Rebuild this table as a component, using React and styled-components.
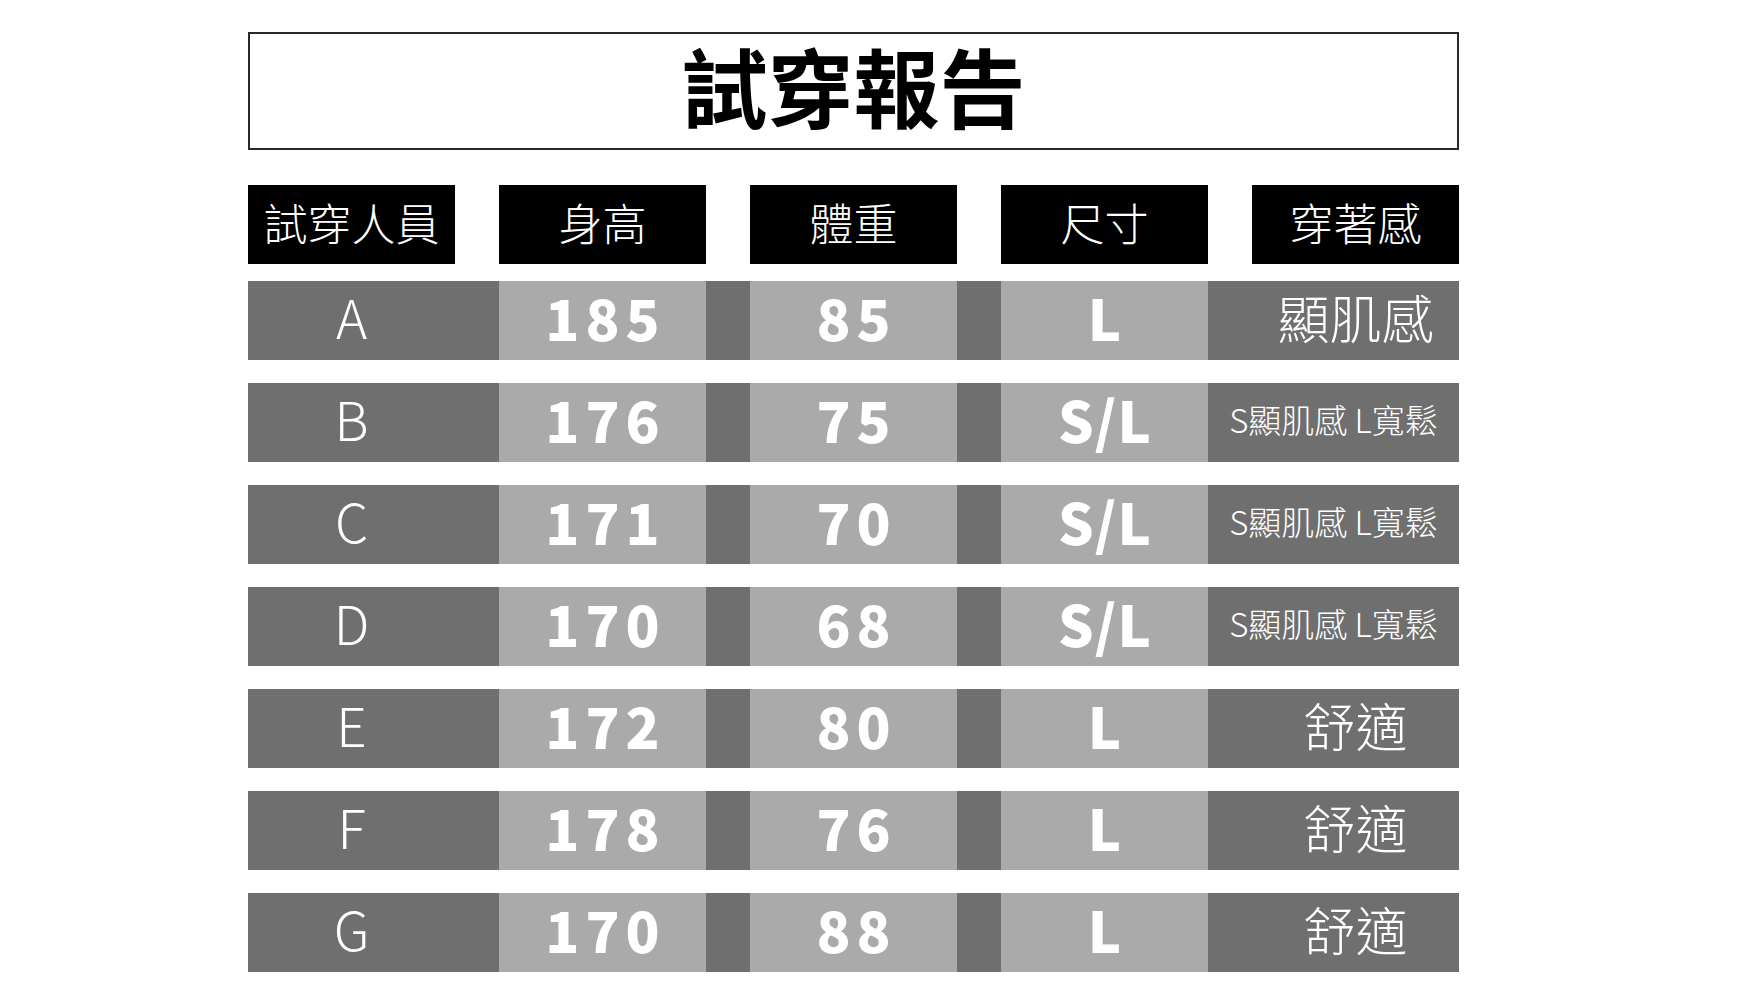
import React from "react";
import styled, { createGlobalStyle } from "styled-components";

const GlobalStyle = createGlobalStyle`
  body {
    margin: 0;
    background: #fff;
    font-family: "Noto Sans CJK TC", "Noto Sans", sans-serif;
  }
`;

const Page = styled.div`
  padding: 32px 0 0 248px;
`;

const Sheet = styled.div`
  width: 1211px;
  display: flex;
  flex-direction: column;
`;

const TitleBox = styled.div`
  height: 118px;
  box-sizing: border-box;
  border: 2px solid #2a2a2a;
  padding-bottom: 12px;
  display: flex;
  align-items: center;
  justify-content: center;
  font-size: 86px;
  font-weight: 700;
  color: #000;
  line-height: 1;
`;

const HeaderRow = styled.div`
  margin-top: 35px;
  display: grid;
  grid-template-columns: repeat(5, 207px);
  column-gap: 44px;
  height: 79px;
`;

const HeaderCell = styled.div`
  background: #000;
  color: #fff;
  display: flex;
  align-items: center;
  justify-content: center;
  padding-bottom: 6px;
  font-size: 44px;
  font-weight: 300;
  line-height: 1;
`;

const Rows = styled.div`
  margin-top: 17px;
  display: flex;
  flex-direction: column;
  gap: 23px;
`;

const DataRow = styled.div`
  display: grid;
  grid-template-columns: 207px 44px 207px 44px 207px 44px 207px 44px 207px;
  height: 79px;
  background: #6f6f6f;
  color: #fff;
`;

const NameCell = styled.div`
  grid-column: 1;
  display: flex;
  align-items: center;
  justify-content: center;
  padding-bottom: 8px;
  font-size: 53px;
  font-weight: 300;
  line-height: 1;
`;

const ValueCell = styled.div`
  grid-column: ${({ $col }) => $col};
  background: #aaaaaa;
  display: flex;
  align-items: center;
  justify-content: center;
  padding-bottom: 8px;
  padding-left: ${({ $tight }) => ($tight ? "1px" : "6px")};
  font-size: 56px;
  font-weight: 900;
  letter-spacing: ${({ $tight }) => ($tight ? "1px" : "6px")};
  line-height: 1;
`;

const FeelCell = styled.div`
  grid-column: 8 / 10;
  display: flex;
  align-items: center;
  justify-content: center;
  padding-left: ${({ $wide }) => ($wide ? "0" : "44px")};
  padding-bottom: ${({ $wide }) => ($wide ? "6px" : "8px")};
  font-size: ${({ $wide }) => ($wide ? "33px" : "52px")};
  font-weight: 300;
  line-height: 1;
  white-space: nowrap;
`;

const headers = ["試穿人員", "身高", "體重", "尺寸", "穿著感"];

const people = [
  { name: "A", height: 185, weight: 85, size: "L", feel: "顯肌感" },
  { name: "B", height: 176, weight: 75, size: "S/L", feel: "S顯肌感 L寬鬆", wide: true },
  { name: "C", height: 171, weight: 70, size: "S/L", feel: "S顯肌感 L寬鬆", wide: true },
  { name: "D", height: 170, weight: 68, size: "S/L", feel: "S顯肌感 L寬鬆", wide: true },
  { name: "E", height: 172, weight: 80, size: "L", feel: "舒適" },
  { name: "F", height: 178, weight: 76, size: "L", feel: "舒適" },
  { name: "G", height: 170, weight: 88, size: "L", feel: "舒適" },
];

export default function App() {
  return (
    <>
      <GlobalStyle />
      <Page>
        <Sheet>
          <TitleBox>試穿報告</TitleBox>
          <HeaderRow>
            {headers.map((h) => (
              <HeaderCell key={h}>{h}</HeaderCell>
            ))}
          </HeaderRow>
          <Rows>
            {people.map((p) => (
              <DataRow key={p.name}>
                <NameCell>{p.name}</NameCell>
                <ValueCell $col={3}>{p.height}</ValueCell>
                <ValueCell $col={5}>{p.weight}</ValueCell>
                <ValueCell $col={7} $tight>
                  {p.size}
                </ValueCell>
                <FeelCell $wide={p.wide}>{p.feel}</FeelCell>
              </DataRow>
            ))}
          </Rows>
        </Sheet>
      </Page>
    </>
  );
}
